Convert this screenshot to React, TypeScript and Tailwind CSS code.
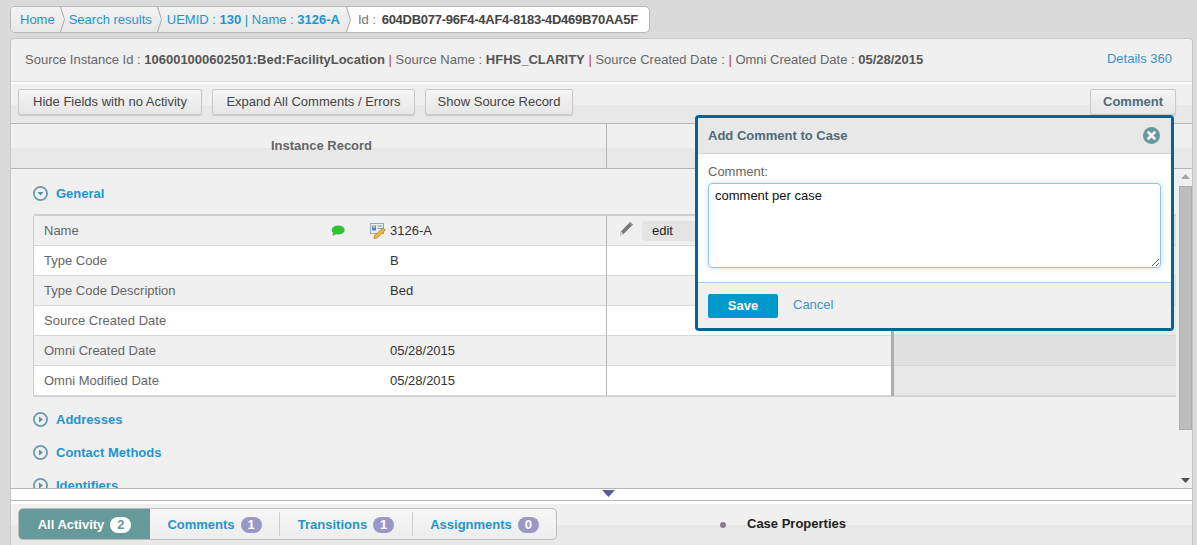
import React from "react";

const font = { fontFamily: '"Liberation Sans", Arial, sans-serif' };

function Sep({ last }: { last?: boolean }) {
  return (
    <div className={`h-full w-[5px] shrink-0 ${last ? "" : "bg-gradient-to-b from-[#f3f3f3] to-[#e8e8e8]"}`}>
      <svg width="5" height="25" viewBox="0 0 5 25" className="block">
        {last ? <polygon points="0,0 0.5,0 4.5,12.5 0.5,25 0,25" fill="#ececec" /> : null}
        <polyline points="0.5,0 4.5,12.5 0.5,25" fill="none" stroke="#a9a9a9" strokeWidth="1" />
      </svg>
    </div>
  );
}

function Crumbs() {
  const item = "flex h-full items-center bg-gradient-to-b from-[#f3f3f3] to-[#e8e8e8]";
  return (
    <div className="ml-[10px] mt-[6px] flex h-[27px] w-[640px] items-center overflow-hidden rounded-[5px] border border-[#b8b8b8] bg-white text-[13px] text-[#1f95d0]">
      <div className={`${item} pl-[9px] pr-[5px]`}>Home</div>
      <Sep />
      <div className={`${item} pl-[4px] pr-[5px]`}>Search results</div>
      <Sep />
      <div className={`${item} pl-[5px] pr-[6px]`}>
        UEMID :&nbsp;<b className="font-bold">130</b>&nbsp;| Name :&nbsp;<b className="font-bold">3126-A</b>
      </div>
      <Sep last />
      <div className="flex h-full items-center pl-[7px] text-[#777]">
        Id :&nbsp;<b className="ml-[2px] font-bold tracking-[-0.27px] text-[#444]">604DB077-96F4-4AF4-8183-4D469B70AA5F</b>
      </div>
    </div>
  );
}

function Btn({ children, w }: { children: React.ReactNode; w: string }) {
  return (
    <button className={`${w} h-[26px] rounded-[2px] border border-[#c9c9c9] bg-gradient-to-b from-[#f5f5f5] to-[#e6e6e6] pb-[2px] text-center text-[13px] leading-[21px] text-[#444] shadow-[0_1px_1px_rgba(0,0,0,0.12)]`}>
      {children}
    </button>
  );
}

function Chevron({ open }: { open?: boolean }) {
  return (
    <svg width="15" height="15" viewBox="0 0 15 15" className="shrink-0">
      <circle cx="7.5" cy="7.5" r="6.6" fill="none" stroke="#6c9bb0" strokeWidth="1.8" />
      {open ? <polygon points="4.5,6 10.5,6 7.5,9.5" fill="#5f8ea3" /> : <polygon points="6,4.5 10,7.5 6,10.5" fill="#5f8ea3" />}
    </svg>
  );
}

function Section({ open, label, className }: { open?: boolean; label: string; className: string }) {
  return (
    <div className={`flex h-[15px] items-center gap-[8px] text-[13px] font-bold leading-[15px] text-[#1f95d0] ${className}`}>
      <Chevron open={open} />
      <span>{label}</span>
    </div>
  );
}

function Bubble() {
  return (
    <svg width="14" height="12" viewBox="0 0 14 12" className="-ml-[1px]">
      <ellipse cx="7.2" cy="5" rx="6.5" ry="4.6" fill="#2fc42f" />
      <polygon points="2,7 1.5,11 6,8.5" fill="#2fc42f" />
    </svg>
  );
}

function CardIcon() {
  return (
    <svg width="16" height="17" viewBox="0 0 16 17">
      <rect x="0.5" y="1.5" width="13" height="10" fill="#e8eef5" stroke="#9aa7b8" />
      <rect x="2" y="3.5" width="4" height="5" fill="#4a86c5" />
      <circle cx="4" cy="4.5" r="1.4" fill="#e4b58f" />
      <rect x="7.5" y="3.5" width="5" height="1" fill="#8b9bb0" />
      <rect x="7.5" y="6" width="5" height="1" fill="#8b9bb0" />
      <polygon points="13,6 15.5,8 7,16 4,16.5 4.5,13.5" fill="#f0b93c" stroke="#a8771b" strokeWidth="0.7" />
    </svg>
  );
}

function Pencil() {
  return (
    <svg width="16" height="16" viewBox="0 0 16 16" className="-mt-[4px]">
      <polygon points="12,1 15,3.5 5.5,13 2,14.5 3,10.5" fill="#777" />
      <polygon points="3,10.5 5.5,13 2,14.5" fill="#d5d5d5" />
      <polygon points="12,1 15,3.5 13.7,4.8 10.8,2.2" fill="#999" />
    </svg>
  );
}

type RowData = { label: string; value: string; gray: boolean; first?: boolean; side?: string };
const rows: RowData[] = [
  { label: "Name", value: "3126-A", gray: true, first: true, side: "bg-[#e1e1e1]" },
  { label: "Type Code", value: "B", gray: false, side: "bg-[#e8e8e8]" },
  { label: "Type Code Description", value: "Bed", gray: true, side: "bg-[#e1e1e1]" },
  { label: "Source Created Date", value: "", gray: false, side: "bg-[#e8e8e8]" },
  { label: "Omni Created Date", value: "05/28/2015", gray: true, side: "bg-[#e1e1e1]" },
  { label: "Omni Modified Date", value: "05/28/2015", gray: false, side: "bg-[#e8e8e8]" },
];

function Row({ r }: { r: RowData }) {
  return (
    <div className="grid h-[30px] grid-cols-[573px_287px_1fr] text-[13px]">
      <div className={`flex items-center border-b border-r border-b-[#d8d8d8] border-r-[#b5b5b5] ${r.gray ? "bg-[#f0f0f0]" : "bg-white"}`}>
        <span className="w-[298px] pl-[10px] text-[#666]">{r.label}</span>
        <span className="flex w-[38px] items-center">{r.first ? <Bubble /> : null}</span>
        <span className="flex w-[20px] items-center">{r.first ? <CardIcon /> : null}</span>
        <span className="text-[#333]">{r.value}</span>
      </div>
      <div className={`border-r-[3px] border-[#aeaeae] ${r.gray ? "bg-[#f0f0f0]" : "bg-white"}`}>
        <div className="flex h-full items-center border-b border-[#d8d8d8] pl-[11px]">
          {r.first ? (
            <>
              <Pencil />
              <span className="ml-[8px] flex h-[20px] w-[200px] items-center rounded-[4px] bg-[#e4e4e4] pl-[10px] text-[#222]">edit</span>
            </>
          ) : null}
        </div>
      </div>
      <div className={`border-b border-[#d8d8d8] ${r.side}`} />
    </div>
  );
}

function Scrollbar() {
  return (
    <div className="flex h-full w-[14px] shrink-0 flex-col items-center bg-[#f0f0f0]">
      <svg width="9" height="6" viewBox="0 0 9 6" className="mt-[5px] shrink-0">
        <polygon points="4.5,0 9,5 0,5" fill="#a6a6a6" />
      </svg>
      <div className="mt-[6px] h-[244px] w-[13px] shrink-0 border border-[#aeaeae] bg-[#bdbdbd]" />
      <div className="flex-1" />
      <svg width="9" height="6" viewBox="0 0 9 6" className="mb-[4px] shrink-0">
        <polygon points="0,0 9,0 4.5,5" fill="#505050" />
      </svg>
    </div>
  );
}

function Badge({ n, white }: { n: number; white?: boolean }) {
  return (
    <span className={`ml-[6px] flex h-[16px] w-[21px] items-center justify-center rounded-full text-[13px] font-bold ${white ? "bg-white text-[#669999]" : "bg-[#9b98c9] text-white"}`}>
      {n}
    </span>
  );
}

function Tab({ label, n, w, last }: { label: string; n: number; w: string; last?: boolean }) {
  return (
    <div className={`my-[3px] flex items-center justify-center pt-[1px] ${w} ${last ? "" : "border-r border-[#cfcfcf]"}`}>
      <span className="text-[13px] font-bold text-[#1f95d0]">{label}</span>
      <Badge n={n} />
    </div>
  );
}

function Modal() {
  return (
    <div className="absolute left-[684px] top-[76px] flex h-[216px] w-[479px] flex-col rounded-[4px] border-[3px] border-[#006699] bg-white">
      <div className="flex h-[36px] shrink-0 items-center justify-between border-b border-[#d4d4d4] bg-[#e8e8e8] pl-[10px] pr-[11px]">
        <span className="text-[13px] font-bold text-[#4f6a78]">Add Comment to Case</span>
        <svg width="17" height="17" viewBox="0 0 17 17">
          <circle cx="8.5" cy="8.5" r="8.5" fill="#669999" />
          <path d="M5.5 5.5 L11.5 11.5 M11.5 5.5 L5.5 11.5" stroke="#fff" strokeWidth="2.6" strokeLinecap="round" />
        </svg>
      </div>
      <div className="flex flex-1 flex-col px-[10px] pt-[10px]">
        <label className="text-[13px] leading-[15px] text-[#666]">Comment:</label>
        <textarea
          readOnly
          defaultValue="comment per case"
          className="mt-[4px] h-[85px] w-[453px] rounded-[4px] border border-[#90c4f0] bg-white px-[6px] py-[4px] text-[13px] leading-[16px] text-[#111] shadow-[0_0_6px_rgba(140,190,240,0.45)] outline-none"
        />
      </div>
      <div className="flex h-[46px] shrink-0 items-start border-t border-[#a5cff2] bg-[#f0f0f0] pl-[10px] pt-[11px]">
        <button className="h-[24px] w-[70px] rounded-[2px] bg-[#0099cc] text-[13px] font-bold text-white">Save</button>
        <span className="ml-[15px] mt-[1px] text-[13px] text-[#3a93d6]">Cancel</span>
      </div>
    </div>
  );
}

export default function App() {
  return (
    <div style={font} className="flex h-[545px] w-[1197px] flex-col overflow-hidden bg-[#dadada]">
      <Crumbs />
      <div className="relative ml-[10px] mt-[5px] flex h-[507px] w-[1183px] flex-col rounded-t-[4px] border-x border-t border-[#c6c6c6] bg-[#f0f0f0]">
        <div className="flex h-[42px] shrink-0 items-center justify-between pl-[14px] pr-[20px] text-[13px] text-[#666]">
          <div className="whitespace-nowrap">
            Source Instance Id : <b className="text-[#555]">106001000602501:Bed:FacilityLocation</b> <span className="text-[#c0392b]">|</span> Source Name : <b className="text-[#555]">HFHS_CLARITY</b> <span className="text-[#c0392b]">|</span> Source Created Date : <span className="text-[#c0392b]">|</span> Omni Created Date : <b className="text-[#555]">05/28/2015</b>
          </div>
          <span className="-mt-[3px] text-[#3a8fcf]">Details 360</span>
        </div>
        <div className="h-[3px] shrink-0 border-t border-[#dcdcdc] bg-white" />
        <div className="flex h-[40px] shrink-0 items-start justify-between border-b border-[#b5b5b5] bg-gradient-to-b from-[#f0f0f0] from-[55%] to-[#e8e8e8] to-[55%] pl-[7px] pr-[16px] pt-[5px]">
          <div className="flex gap-[10px]">
            <Btn w="w-[184px]">Hide Fields with no Activity</Btn>
            <Btn w="w-[203px]">Expand All Comments / Errors</Btn>
            <Btn w="w-[148px]">Show Source Record</Btn>
          </div>
          <Btn w="w-[86px] font-bold !text-[#4f6a78]">Comment</Btn>
        </div>
        <div className="grid h-[45px] shrink-0 grid-cols-[596px_1fr] border-b border-[#b5b5b5] bg-gradient-to-b from-[#f0f0f0] from-[55%] to-[#e8e8e8] to-[55%] text-[13px] font-bold text-[#666]">
          <div className="flex items-center justify-center border-r border-[#b5b5b5] pl-[26px]">Instance Record</div>
          <div />
        </div>
        <div className="flex h-[319px] shrink-0 overflow-hidden">
          <div className="w-[1167px] shrink-0 overflow-hidden pl-[22px]">
            <Section open label="General" className="mt-[17px]" />
            <div className="mt-[13px] w-[1143px] rounded-tl-[3px] border-b border-l border-t-[2px] border-[#cfcfcf]">
              {rows.map((r) => (
                <Row key={r.label} r={r} />
              ))}
            </div>
            <Section label="Addresses" className="mt-[15px]" />
            <Section label="Contact Methods" className="mt-[18px]" />
            <Section label="Identifiers" className="mt-[18px]" />
          </div>
          <Scrollbar />
        </div>
        <div className="flex h-[13px] shrink-0 justify-start border-y border-[#b5b5b5] bg-white pl-[591px] pt-[1px]">
          <svg width="13" height="7" viewBox="0 0 13 7">
            <polygon points="0,0 13,0 6.5,7" fill="#5c5c96" />
          </svg>
        </div>
        <div className="h-[3px] shrink-0 bg-white" />
        <div className="flex flex-1 items-start bg-gradient-to-b from-[#f0f0f0] from-50% to-[#e8e8e8] to-50% pl-[7px] pt-[4px]">
          <div className="flex h-[32px] w-[539px] overflow-hidden rounded-[5px] border border-[#bdbdbd] bg-gradient-to-b from-[#f7f7f7] to-[#ededed]">
            <div className="flex h-full w-[131px] items-center justify-center bg-[#669999] pt-[1px]">
              <span className="text-[13px] font-bold text-white">All Activity</span>
              <Badge n={2} white />
            </div>
            <Tab label="Comments" n={1} w="w-[130px]" />
            <Tab label="Transitions" n={1} w="w-[133px]" />
            <Tab label="Assignments" n={0} w="w-[143px]" last />
          </div>
          <span className="ml-[163px] mt-[14px] h-[6px] w-[6px] rounded-full bg-[#8a7d8e]" />
          <span className="ml-[21px] mt-[6px] text-[13px] font-bold text-[#222]">Case Properties</span>
        </div>
        <Modal />
      </div>
    </div>
  );
}
